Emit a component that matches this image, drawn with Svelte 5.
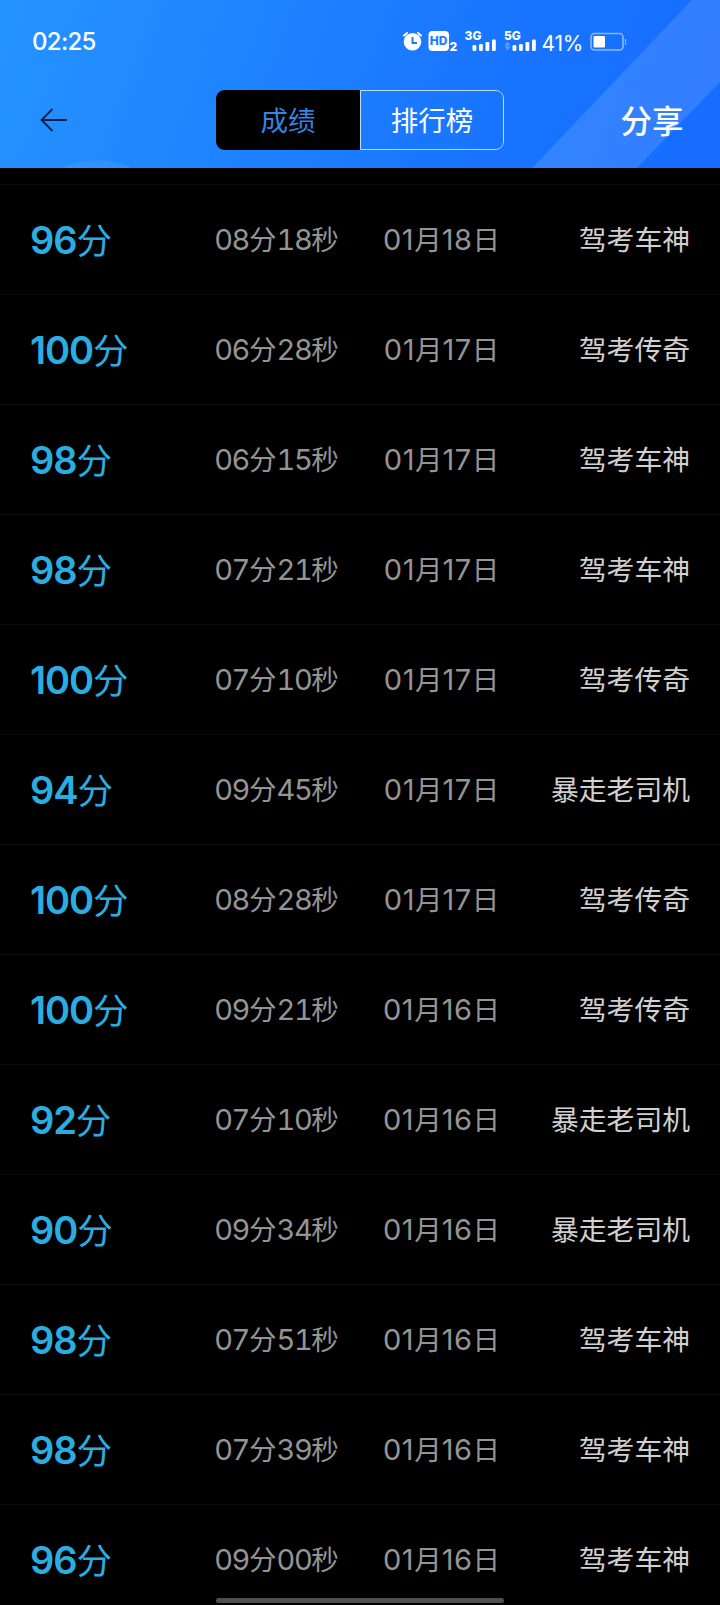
<script lang="ts">
    type Result = { score: number; time: string; date: string; title: string };

    const results: Result[] = [
        { score: 96, time: '08分18秒', date: '01月18日', title: '驾考车神' },
        { score: 100, time: '06分28秒', date: '01月17日', title: '驾考传奇' },
        { score: 98, time: '06分15秒', date: '01月17日', title: '驾考车神' },
        { score: 98, time: '07分21秒', date: '01月17日', title: '驾考车神' },
        { score: 100, time: '07分10秒', date: '01月17日', title: '驾考传奇' },
        { score: 94, time: '09分45秒', date: '01月17日', title: '暴走老司机' },
        { score: 100, time: '08分28秒', date: '01月17日', title: '驾考传奇' },
        { score: 100, time: '09分21秒', date: '01月16日', title: '驾考传奇' },
        { score: 92, time: '07分10秒', date: '01月16日', title: '暴走老司机' },
        { score: 90, time: '09分34秒', date: '01月16日', title: '暴走老司机' },
        { score: 98, time: '07分51秒', date: '01月16日', title: '驾考车神' },
        { score: 98, time: '07分39秒', date: '01月16日', title: '驾考车神' },
        { score: 96, time: '09分00秒', date: '01月16日', title: '驾考车神' }
    ];

    let tab = $state('score');

    // digits and units are set in different sizes
    const split = (text: string) => text.match(/\d+|\D+/g) ?? [];
</script>

{#snippet mixed(text: string)}
    {#each split(text) as part}<span class={/\d/.test(part) ? 'num' : 'unit'}>{part}</span>{/each}
{/snippet}

<div class="screen">
    <header>
        <svg class="backdrop" viewBox="0 0 720 168" aria-hidden="true">
            <path d="M692 0H720V82L637 168H532Z" fill="#fff" fill-opacity=".12" />
            <circle cx="97" cy="240" r="80" fill="#fff" fill-opacity=".07" />
        </svg>

        <div class="status">
            <span class="clock">02:25</span>
            <svg class="indicators" width="138" height="30" viewBox="402 26 138 30">
                <g fill="#fff">
                    <circle cx="412.500" cy="41.800" r="8.800" />
                    <path d="M404 35.500l3-2.500M421 35.500l-3-2.500" stroke="#fff" stroke-width="2" stroke-linecap="round" />
                    <path d="M412.500 37v6h4.500" fill="none" stroke="#1d7bff" stroke-width="1.900" />
                    <rect x="428.500" y="31" width="20.500" height="20" rx="4" />
                    <text x="438.700" y="45.300" class="hd">HD</text>
                    <text x="449.500" y="50.500" class="sim">2</text>
                    <text x="464.500" y="40.300" class="net">3G</text>
                    <rect x="472.500" y="45" width="3.800" height="6" rx="1.200" />
                    <rect x="479" y="44" width="3.800" height="7" rx="1.200" />
                    <rect x="485.500" y="42" width="3.800" height="9" rx="1.200" />
                    <rect x="492" y="39.500" width="3.800" height="11.500" rx="1.200" />
                    <text x="504" y="40.300" class="net">5G</text>
                    <path d="M504.500 45.500l3-4 3 4zM504.500 46.500l3 4 3-4z" fill-opacity=".3" />
                    <rect x="512.500" y="45" width="3.800" height="6" rx="1.200" />
                    <rect x="519" y="44" width="3.800" height="7" rx="1.200" />
                    <rect x="525.500" y="42" width="3.800" height="9" rx="1.200" />
                    <rect x="532" y="39.500" width="3.800" height="11.500" rx="1.200" />
                </g>
            </svg>
            <span class="percent">41%</span>
            <svg class="battery" width="38" height="20" viewBox="0 0 38 20">
                <rect x="1" y="1.500" width="32" height="16.500" rx="3.500" fill="none" stroke="#fff" stroke-opacity=".5" stroke-width="1.600" />
                <path d="M35.500 7v6" stroke="#fff" stroke-opacity=".5" stroke-width="1.200" />
                <rect x="3.500" y="4" width="11.500" height="11.500" rx="1" fill="#fff" />
            </svg>
        </div>

        <nav>
            <button class="back" aria-label="返回">
                <svg width="28" height="24" viewBox="0 0 28 24">
                    <path d="M12.500 1L1.500 12l11 11M1.500 12H27" />
                </svg>
            </button>
            <div class="tabs">
                <button class:active={tab === 'score'} onclick={() => (tab = 'score')}>成绩</button>
                <button class:active={tab === 'rank'} onclick={() => (tab = 'rank')}>排行榜</button>
            </div>
            <button class="share">分享</button>
        </nav>
    </header>

    <ul>
        {#each results as result}
            <li>
                <span class="score">{@render mixed(`${result.score}分`)}</span>
                <span class="time">{@render mixed(result.time)}</span>
                <span class="date">{@render mixed(result.date)}</span>
                <span class="title">{result.title}</span>
            </li>
        {/each}
    </ul>

    <div class="home-bar"></div>
</div>

<style>
    :global(body) {
        background: #000;
    }

    .screen {
        position: relative;
        width: 720px;
        height: 1605px;
        overflow: hidden;
        background: #000;
        font-family: Inter, 'Noto Sans CJK SC', sans-serif;
    }

    header {
        position: relative;
        height: 168px;
        box-sizing: border-box;
        background: linear-gradient(110deg, #2593ff 0%, #1e82ff 38%, #1874ff 68%, #166cff 100%);
        color: #fff;
    }

    .backdrop {
        position: absolute;
        inset: 0;
    }

    .status {
        position: relative;
        display: flex;
        align-items: center;
        height: 82px;
        padding-left: 32px;
    }

    .clock {
        width: 369.5px;
        font-size: 24px;
        font-weight: 500;
        letter-spacing: -0.7px;
    }

    .indicators {
        flex: none;
    }

    .indicators text {
        font-family: Inter, sans-serif;
        font-weight: 800;
    }

    .hd {
        font-size: 12px;
        fill: #1d7bff;
        text-anchor: middle;
    }

    .sim {
        font-size: 12px;
    }

    .net {
        font-size: 12px;
    }

    .percent {
        width: 48px;
        margin-left: 2px;
        padding-top: 4px;
        font-size: 21px;
        letter-spacing: -0.2px;
    }

    .battery {
        margin-top: 1px;
    }

    nav {
        position: relative;
        display: flex;
        align-items: center;
        justify-content: space-between;
        height: 76px;
        padding: 0 36px 0 40px;
    }

    button {
        padding: 0;
        border: 0;
        background: none;
        color: #fff;
        font: inherit;
    }

    .back {
        width: 60px;
        height: 28px;
        text-align: left;
    }

    .back svg {
        display: block;
    }

    .back path {
        fill: none;
        stroke: #0b1c4a;
        stroke-width: 1.8;
    }

    .tabs {
        display: flex;
        width: 288px;
        height: 60px;
        box-sizing: border-box;
        overflow: hidden;
        border-radius: 8px;
    }

    .tabs button {
        flex: 1;
        padding-bottom: 2px;
        border: 1.5px solid #b9dcff;
        border-radius: 0 8px 8px 0;
        font-size: 27.5px;
    }

    .tabs button:first-child {
        border-radius: 8px 0 0 8px;
    }

    .tabs .active {
        border-color: #000;
        background: #000;
        color: #3285e6;
    }

    .share {
        width: 64px;
        padding-bottom: 2px;
        font-size: 31.5px;
        font-weight: 500;
        white-space: nowrap;
    }

    ul {
        margin: 16px 0 0;
        padding: 0;
        list-style: none;
    }

    li {
        display: grid;
        grid-template-columns: 171px 151px 179px 1fr;
        align-items: center;
        height: 110px;
        box-sizing: border-box;
        padding: 1px 30px 0;
        border-top: 1px solid #0d0d0d;
    }

    li > span {
        line-height: 40px;
        white-space: nowrap;
    }

    .score {
        padding-top: 1px;
        color: #2aaee2;
        font-size: 35.5px;
    }

    .score :global(.num) {
        font-size: 38px;
        font-weight: 600;
        letter-spacing: -1.1px;
    }

    .time,
    .date {
        color: #949494;
        font-size: 27.5px;
        text-align: center;
    }

    .time :global(.num) {
        font-size: 29px;
        font-variant-numeric: tabular-nums;
        letter-spacing: -1.4px;
    }

    .date :global(.num) {
        font-size: 29px;
        letter-spacing: 0.5px;
    }

    .title {
        color: #d0d0d0;
        font-size: 27.8px;
        text-align: right;
    }

    .home-bar {
        position: absolute;
        bottom: 2px;
        left: 216px;
        width: 288px;
        height: 5px;
        border-radius: 3px;
        background: #505050;
    }
</style>
